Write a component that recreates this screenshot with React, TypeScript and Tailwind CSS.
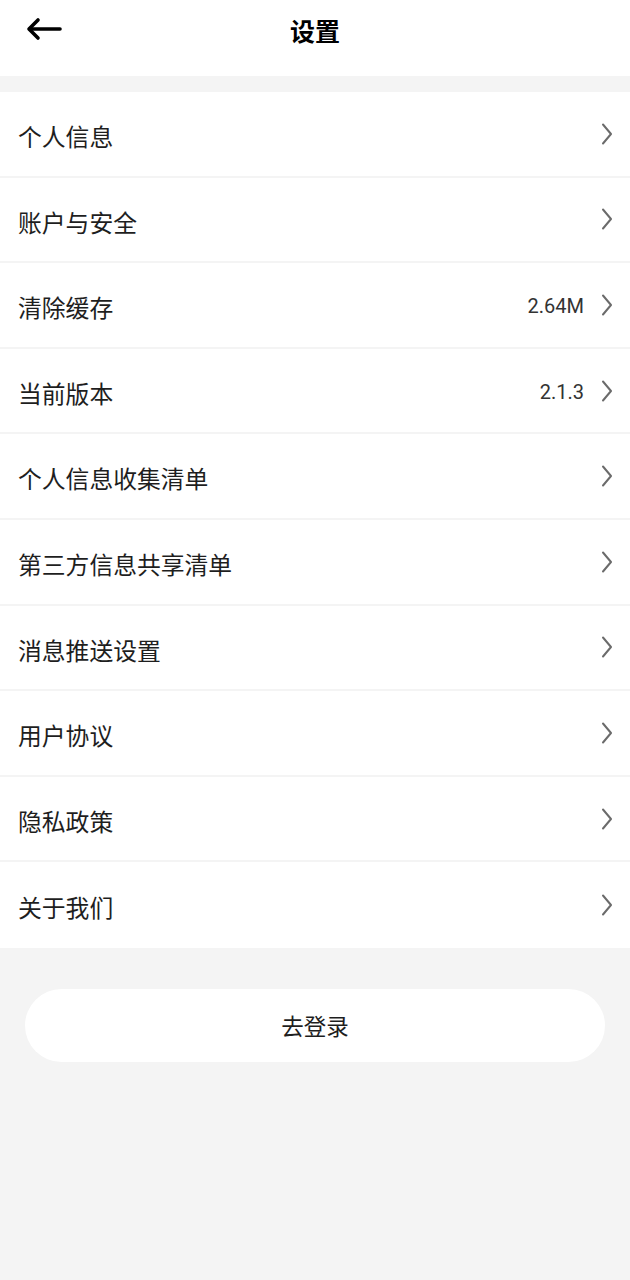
import React from "react";

const items: { label: string; value?: string }[] = [
  { label: "个人信息" },
  { label: "账户与安全" },
  { label: "清除缓存", value: "2.64M" },
  { label: "当前版本", value: "2.1.3" },
  { label: "个人信息收集清单" },
  { label: "第三方信息共享清单" },
  { label: "消息推送设置" },
  { label: "用户协议" },
  { label: "隐私政策" },
  { label: "关于我们" },
];

const font = {
  fontFamily: '"Noto Sans CJK SC", "Noto Sans", Roboto, sans-serif',
};

function Chevron() {
  return (
    <svg width="14" height="22" viewBox="0 0 14 22" fill="none" className="shrink-0">
      <path d="M3 1.5 L11 11 L3 20.5" stroke="#6b6b6b" strokeWidth="2" strokeLinecap="round" strokeLinejoin="round" />
    </svg>
  );
}

export default function App() {
  return (
    <div className="w-[630px] min-h-[1280px] bg-[#f4f4f4] flex flex-col" style={font}>
      <div className="h-[76px] bg-white relative flex items-center justify-center">
        <svg
          width="38"
          height="26"
          viewBox="0 0 38 26"
          className="absolute left-[25px] top-[16px]"
          fill="none"
        >
          <path d="M35 13 H5" stroke="#000" strokeWidth="3.6" strokeLinecap="round" />
          <path d="M13 4 L4 13 L13 22" stroke="#000" strokeWidth="3.6" strokeLinecap="round" strokeLinejoin="round" />
        </svg>
        <span className="text-[25px] font-bold text-black mt-[-14px]">设置</span>
      </div>
      <div className="h-[16px]" />
      <div className="bg-white flex flex-col">
        {items.map((it, i) => (
          <div
            key={it.label}
            className={
              "h-[85.6px] flex items-center pl-[18px] pr-[16px] " +
              (i < items.length - 1 ? "border-b-2 border-[#f4f4f4]" : "")
            }
          >
            <span className="flex-1 text-[23.8px] text-[#1e1e1e] pt-[4px]">{it.label}</span>
            {it.value && (
              <span className="text-[20px] text-[#333] mr-[16px] pt-[2px]" style={{ fontFamily: 'Roboto, "Noto Sans", sans-serif' }}>
                {it.value}
              </span>
            )}
            <Chevron />
          </div>
        ))}
      </div>
      <div className="px-[25px] pt-[41px]">
        <div className="h-[73px] bg-white rounded-full flex items-center justify-center">
          <span className="text-[22.5px] text-[#1e1e1e]">去登录</span>
        </div>
      </div>
    </div>
  );
}
